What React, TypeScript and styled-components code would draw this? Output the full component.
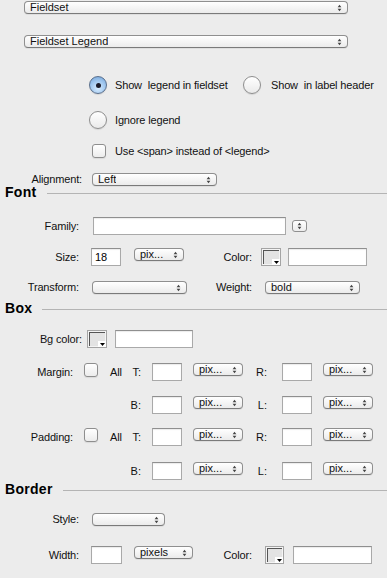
import React from "react";
import styled, { createGlobalStyle } from "styled-components";

const Global = createGlobalStyle`
  html, body { margin: 0; padding: 0; background: #ececec; }
  body {
    font-family: "Liberation Sans", Arial, Helvetica, sans-serif;
    font-size: 11px;
    color: #111;
  }
`;

const Page = styled.div`
  width: 387px;
  height: 578px;
  overflow: hidden;
  display: flex;
  flex-direction: column;
  background: #ececec;
`;

const Row = styled.div<{ $mt: number; $h?: number; $pl?: number }>`
  display: flex;
  align-items: center;
  flex-shrink: 0;
  height: ${(p) => p.$h ?? 18}px;
  margin-top: ${(p) => p.$mt}px;
  padding-left: ${(p) => p.$pl ?? 0}px;
`;

const Label = styled.span<{ $w: number }>`
  width: ${(p) => p.$w}px;
  flex-shrink: 0;
  text-align: right;
  white-space: nowrap;
  line-height: 13px;
  letter-spacing: -0.15px;
`;

const Text = styled.span<{ $ml?: number }>`
  margin-left: ${(p) => p.$ml ?? 0}px;
  white-space: pre;
  line-height: 13px;
  letter-spacing: -0.15px;
`;

const Popup = styled.div<{ $w: number; $ml?: number; $top?: boolean }>`
  box-sizing: border-box;
  width: ${(p) => p.$w}px;
  height: 13px;
  margin-left: ${(p) => p.$ml ?? 0}px;
  align-self: ${(p) => (p.$top ? "flex-start" : "center")};
  flex-shrink: 0;
  display: flex;
  align-items: center;
  justify-content: space-between;
  padding: 0 5px 0 5px;
  border: 1px solid #8f8f8f;
  border-bottom-color: #7a7a7a;
  border-radius: 4px;
  background: linear-gradient(#ffffff, #f3f3f3 60%, #ebebeb);
  box-shadow: 0 1px 0 rgba(0, 0, 0, 0.06);
  font-size: 11px;
  line-height: 11px;
  color: #111;
`;

const PopupText = styled.span`
  white-space: nowrap;
  overflow: hidden;
`;

const Arrows = () => (
  <svg width="5" height="8" viewBox="0 0 5 8" style={{ flexShrink: 0 }}>
    <polygon points="0.6,3.2 2.5,0.8 4.4,3.2" fill="#444" />
    <polygon points="0.6,4.8 2.5,7.2 4.4,4.8" fill="#444" />
  </svg>
);

const Select: React.FC<{ w: number; ml?: number; top?: boolean; children?: React.ReactNode }> = ({
  w,
  ml,
  top,
  children,
}) => (
  <Popup $w={w} $ml={ml} $top={top}>
    <PopupText>{children}</PopupText>
    <Arrows />
  </Popup>
);

const Field = styled.div<{ $w: number; $ml?: number }>`
  box-sizing: border-box;
  width: ${(p) => p.$w}px;
  height: 18px;
  margin-left: ${(p) => p.$ml ?? 0}px;
  flex-shrink: 0;
  background: #fff;
  border: 1px solid #a9a9a9;
  border-top-color: #8f8f8f;
  box-shadow: inset 0 1px 1px rgba(0, 0, 0, 0.08);
  padding: 0 3px;
  font-size: 11px;
  line-height: 16px;
  color: #000;
`;

const Stepper = styled.div<{ $ml?: number }>`
  box-sizing: border-box;
  width: 15px;
  height: 12px;
  margin-left: ${(p) => p.$ml ?? 0}px;
  border: 1px solid #8f8f8f;
  border-radius: 3px;
  background: linear-gradient(#fff, #ededed);
  display: flex;
  align-items: center;
  justify-content: center;
`;

const Well = styled.div<{ $ml?: number; $w?: number }>`
  position: relative;
  box-sizing: border-box;
  width: ${(p) => p.$w ?? 20}px;
  height: 18px;
  margin-left: ${(p) => p.$ml ?? 0}px;
  flex-shrink: 0;
  border: 1px solid #a4a4a4;
  background: #f4f4f4;
  padding: 1px;
`;

const WellFill = styled.div`
  width: 100%;
  height: 100%;
  box-sizing: border-box;
  background: #e3e3e3;
  border-top: 1px solid #555;
  border-left: 1px solid #555;
`;

const WellCorner = styled.div`
  position: absolute;
  right: 0;
  bottom: 0;
  width: 8px;
  height: 6px;
  background: #fff;
  display: flex;
  align-items: center;
  justify-content: center;
`;

const ColorWell: React.FC<{ ml?: number; w?: number }> = ({ ml, w }) => (
  <Well $ml={ml} $w={w}>
    <WellFill />
    <WellCorner>
      <svg width="5" height="3" viewBox="0 0 5 3">
        <polygon points="0,0 5,0 2.5,3" fill="#000" />
      </svg>
    </WellCorner>
  </Well>
);

const Check = styled.span<{ $ml?: number; $top?: boolean }>`
  box-sizing: border-box;
  width: 14px;
  height: 14px;
  margin-left: ${(p) => p.$ml ?? 0}px;
  flex-shrink: 0;
  align-self: ${(p) => (p.$top ? "flex-start" : "center")};
  border: 1px solid #8e8e8e;
  border-radius: 3px;
  background: linear-gradient(#ffffff, #ececec);
  box-shadow: 0 1px 1px rgba(0, 0, 0, 0.08);
`;

const Radio = styled.span<{ $on?: boolean; $ml?: number }>`
  box-sizing: border-box;
  width: 18px;
  height: 18px;
  margin-left: ${(p) => p.$ml ?? 0}px;
  flex-shrink: 0;
  border-radius: 50%;
  border: 1px solid ${(p) => (p.$on ? "#5a6f8c" : "#8e8e8e")};
  background: ${(p) =>
    p.$on
      ? "radial-gradient(circle at 50% 70%, #d7ecff 0%, #9fc6ee 55%, #6d9fd6 100%)"
      : "linear-gradient(#ffffff, #eaeaea)"};
  box-shadow: 0 1px 1px rgba(0, 0, 0, 0.1);
  display: flex;
  align-items: center;
  justify-content: center;
  &::after {
    content: "";
    display: ${(p) => (p.$on ? "block" : "none")};
    width: 5px;
    height: 5px;
    border-radius: 50%;
    background: #1c1c2a;
  }
`;

const RadioOption = styled.div<{ $w?: number }>`
  display: flex;
  align-items: center;
  width: ${(p) => (p.$w ? `${p.$w}px` : "auto")};
  flex-shrink: 0;
`;

const Heading = styled.div<{ $mt: number }>`
  display: flex;
  align-items: flex-start;
  height: 14px;
  flex-shrink: 0;
  margin-top: ${(p) => p.$mt}px;
  padding-left: 5px;
`;

const HeadingTitle = styled.span`
  font-family: "Liberation Sans", Arial, Helvetica, sans-serif;
  font-weight: bold;
  font-size: 14px;
  line-height: 14px;
  letter-spacing: 0.3px;
  color: #000;
`;

const Rule = styled.div`
  flex: 1;
  height: 1px;
  margin-top: 8px;
  margin-left: 10px;
  background: #b4b4b4;
`;

const Lead = styled.div`
  width: 141px;
  display: flex;
  align-items: center;
  flex-shrink: 0;
  height: 100%;
`;

const Letter = styled.span<{ $w?: number }>`
  flex: ${(p) => (p.$w ? "none" : "1")};
  width: ${(p) => (p.$w ? `${p.$w}px` : "auto")};
  text-align: right;
  line-height: 13px;
`;

const SideGroup: React.FC<{ second: string }> = ({ second }) => (
  <>
    <Field $w={30} $ml={11} />
    <Select w={50} ml={11} top>
      pix...
    </Select>
    <Letter $w={24}>{second}</Letter>
    <Field $w={30} $ml={15} />
    <Select w={50} ml={11} top>
      pix...
    </Select>
  </>
);

const SpacingRows: React.FC<{ label: string; mt1: number; mt2: number }> = ({ label, mt1, mt2 }) => (
  <>
    <Row $mt={mt1}>
      <Lead>
        <Label $w={73}>{label}</Label>
        <Check $ml={11} $top />
        <Text $ml={12}>All</Text>
        <Letter>T:</Letter>
      </Lead>
      <SideGroup second="R:" />
    </Row>
    <Row $mt={mt2}>
      <Lead>
        <Letter>B:</Letter>
      </Lead>
      <SideGroup second="L:" />
    </Row>
  </>
);

export default function App() {
  return (
    <Page>
      <Global />
      <Row $mt={1} $h={13} $pl={24}>
        <Select w={324}>Fieldset</Select>
      </Row>
      <Row $mt={21} $h={13} $pl={24}>
        <Select w={324}>Fieldset Legend</Select>
      </Row>

      <Row $mt={28} $pl={89}>
        <RadioOption $w={154}>
          <Radio $on />
          <Text $ml={8}>{"Show  legend in fieldset"}</Text>
        </RadioOption>
        <RadioOption>
          <Radio />
          <Text $ml={10}>{"Show  in label header"}</Text>
        </RadioOption>
      </Row>
      <Row $mt={17} $pl={89}>
        <RadioOption>
          <Radio />
          <Text $ml={8}>Ignore legend</Text>
        </RadioOption>
      </Row>
      <Row $mt={13} $pl={92}>
        <Check />
        <Text $ml={9}>{"Use <span> instead of <legend>"}</Text>
      </Row>
      <Row $mt={13} $h={13}>
        <Label $w={82}>Alignment:</Label>
        <Select w={125} ml={10}>
          Left
        </Select>
      </Row>

      <Heading $mt={-1}>
        <HeadingTitle>Font</HeadingTitle>
        <Rule />
      </Heading>
      <Row $mt={18}>
        <Label $w={79}>Family:</Label>
        <Field $w={193} $ml={14} />
        <Stepper $ml={6}>
          <Arrows />
        </Stepper>
      </Row>
      <Row $mt={13}>
        <Label $w={79}>Size:</Label>
        <Field $w={30} $ml={12}>
          18
        </Field>
        <Select w={50} ml={13} top>
          pix...
        </Select>
        <Label $w={68}>Color:</Label>
        <ColorWell ml={9} />
        <Field $w={79} $ml={7} />
      </Row>
      <Row $mt={15} $h={13}>
        <Label $w={79}>Transform:</Label>
        <Select w={95} ml={13} />
        <Label $w={65}>Weight:</Label>
        <Select w={95} ml={13}>
          bold
        </Select>
      </Row>

      <Heading $mt={7}>
        <HeadingTitle>Box</HeadingTitle>
        <Rule />
      </Heading>
      <Row $mt={15}>
        <Label $w={82}>Bg color:</Label>
        <ColorWell ml={5} />
        <Field $w={78} $ml={8} />
      </Row>
      <SpacingRows label="Margin:" mt1={15} mt2={15} />
      <SpacingRows label="Padding:" mt1={14} mt2={16} />

      <Heading $mt={2}>
        <HeadingTitle>Border</HeadingTitle>
        <Rule />
      </Heading>
      <Row $mt={17} $h={13}>
        <Label $w={79}>Style:</Label>
        <Select w={73} ml={13} />
      </Row>
      <Row $mt={20}>
        <Label $w={79}>Width:</Label>
        <Field $w={31} $ml={12} />
        <Select w={59} ml={12} top>
          pixels
        </Select>
        <Label $w={59}>Color:</Label>
        <ColorWell ml={13} w={19} />
        <Field $w={79} $ml={9} />
      </Row>
    </Page>
  );
}
